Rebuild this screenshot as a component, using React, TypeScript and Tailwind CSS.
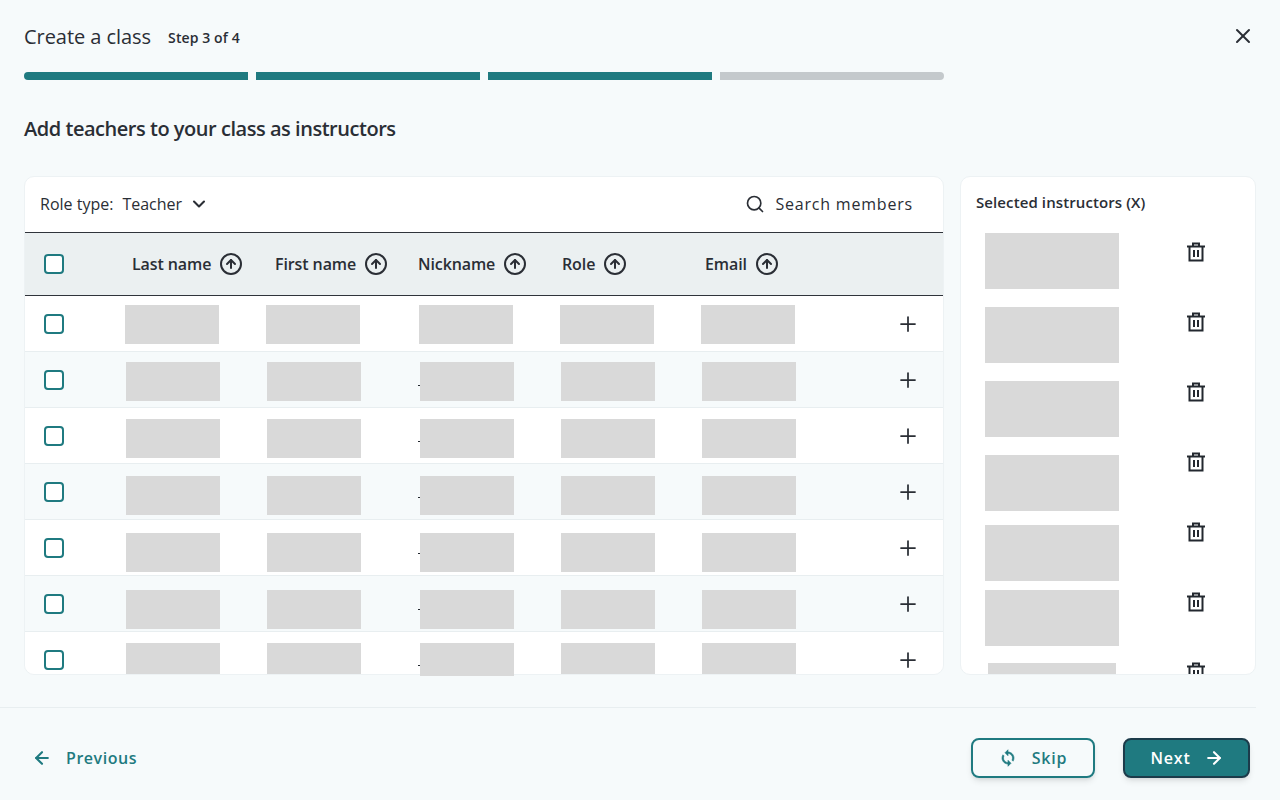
import { ArrowLeft, ArrowRight, ChevronDown, CircleArrowUp, Plus, Search, X } from "lucide-react";

const columns = [
  { label: "Last name", width: "w-[143px]" },
  { label: "First name", width: "w-[143px]" },
  { label: "Nickname", width: "w-[144px]" },
  { label: "Role", width: "w-[143px]" },
  { label: "Email", width: "w-[143px]" },
];

// the placeholder blocks drift a little further down the row each time
const rows = [
  { row: "h-[56px] bg-white border-b", offset: "mt-[9px]", start: "w-[61px]", box: "h-[39px]", nick: "h-[39px]", mark: false },
  { row: "h-[56px] bg-[#f6fafb] border-b", offset: "mt-[10px]", start: "w-[62px]", box: "h-[39px]", nick: "h-[39px]", mark: true },
  { row: "h-[56px] bg-white border-b", offset: "mt-[11px]", start: "w-[62px]", box: "h-[39px]", nick: "h-[39px]", mark: true },
  { row: "h-[56px] bg-[#f6fafb] border-b", offset: "mt-[12px]", start: "w-[62px]", box: "h-[39px]", nick: "h-[39px]", mark: true },
  { row: "h-[56px] bg-white border-b", offset: "mt-[13px]", start: "w-[62px]", box: "h-[39px]", nick: "h-[39px]", mark: true },
  { row: "h-[56px] bg-[#f6fafb] border-b", offset: "mt-[14px]", start: "w-[62px]", box: "h-[39px]", nick: "h-[39px]", mark: true },
  { row: "h-[42px] bg-white rounded-b-[10px]", offset: "mt-[11px]", start: "w-[62px]", box: "h-[31px]", nick: "h-[33px]", mark: true },
];

const selected = [
  "mt-0 ml-[9px] w-[134px] h-[56px]",
  "mt-[18px] ml-[9px] w-[134px] h-[56px]",
  "mt-[18px] ml-[9px] w-[134px] h-[56px]",
  "mt-[18px] ml-[9px] w-[134px] h-[56px]",
  "mt-[14px] ml-[9px] w-[134px] h-[56px]",
  "mt-[9px] ml-[9px] w-[134px] h-[56px]",
  "mt-[17px] ml-[12px] w-[128px] h-[56px]",
];

function Checkbox() {
  return <div className="w-5 h-5 shrink-0 rounded-[4px] border-2 border-[#1f7a80] bg-white" />;
}

function TrashIcon() {
  return (
    <svg width="24" height="24" viewBox="0 0 24 24" fill="none" stroke="#23282f" strokeWidth="2">
      <path d="M3 6.5h18" />
      <path d="M9 6V3.5h6V6" />
      <path d="M5.5 6.5V20.5h13V6.5" />
      <path d="M10 10v7M14 10v7" />
    </svg>
  );
}

function SyncIcon() {
  return (
    <svg width="18" height="18" viewBox="0 0 24 24" fill="currentColor" stroke="currentColor" strokeWidth="0.8">
      <path d="M12 4V1L8 5l4 4V6c3.31 0 6 2.69 6 6 0 1.01-.25 1.97-.7 2.8l1.46 1.46C19.54 15.03 20 13.57 20 12c0-4.42-3.58-8-8-8zm0 14c-3.31 0-6-2.69-6-6 0-1.01.25-1.97.7-2.8L5.24 7.74C4.46 8.97 4 10.43 4 12c0 4.42 3.58 8 8 8v3l4-4-4-4v3z" />
    </svg>
  );
}

export default function App() {
  return (
    <div
      className="w-[1280px] h-[800px] overflow-hidden bg-[#f6fafb] text-[#2a2e35]"
      style={{ fontFamily: '"Open Sans", "Noto Sans", sans-serif' }}
    >
      <div className="px-6 pt-[23px]">
        <div className="flex items-center justify-between h-[28px]">
          <div className="flex items-center gap-[17px]">
            <h1 className="text-[20px] leading-7 tracking-[-0.05px]">Create a class</h1>
            <span className="text-[14px] font-semibold tracking-[0.1px]">Step 3 of 4</span>
          </div>
          <X className="w-6 h-6 mr-px -mt-[2px]" />
        </div>

        <div className="flex gap-2 w-[920px] h-2 mt-[21px]">
          <div className="flex-1 bg-[#1f7a80] rounded-l-full" />
          <div className="flex-1 bg-[#1f7a80]" />
          <div className="flex-1 bg-[#1f7a80]" />
          <div className="flex-1 bg-[#c4c9cc] rounded-r-full" />
        </div>

        <h2 className="mt-[35px] text-[20px] leading-7 font-semibold tracking-[-0.47px]">
          Add teachers to your class as instructors
        </h2>

        <div className="flex gap-4 mt-[33px] h-[499px]">
          <div className="w-[920px] bg-white rounded-[10px] border border-[#edf2f4]">
            <div className="flex items-center justify-between h-[56px] pl-[15px] pr-[30px] pb-[2px] border-b border-[#2f343b] text-[16px]">
              <div className="flex items-center">
                <span>Role type:</span>
                <span className="ml-[9px]">Teacher</span>
                <ChevronDown className="w-5 h-5 ml-[7px]" strokeWidth={2.5} />
              </div>
              <div className="flex items-center gap-[10px]">
                <Search className="w-5 h-5" />
                <span className="tracking-[0.8px]">Search members</span>
              </div>
            </div>

            <div className="flex items-center h-[63px] bg-[#ebf0f1] border-b border-[#2f343b] pl-[19px]">
              <Checkbox />
              <div className="flex ml-[68px]">
                {columns.map((c) => (
                  <div key={c.label} className={`flex items-center gap-2 ${c.width}`}>
                    <span className="text-[16px] font-semibold tracking-[-0.1px]">{c.label}</span>
                    <CircleArrowUp className="w-6 h-6" />
                  </div>
                ))}
              </div>
            </div>

            {rows.map((r, i) => (
              <div key={i} className={`relative flex items-start pl-[19px] border-[#e8eef0] ${r.row}`}>
                <div className="mt-[18px]">
                  <Checkbox />
                </div>
                <div className={`flex ${r.offset}`}>
                  <div className={`${r.start} shrink-0`} />
                  <div className={`w-[141px] ${r.box}`}>
                    <div className="w-[94px] h-full bg-[#d9d9d9]" />
                  </div>
                  <div className={`w-[153px] ${r.box}`}>
                    <div className="w-[94px] h-full bg-[#d9d9d9]" />
                  </div>
                  <div className={`w-[141px] ${r.nick}`}>
                    <div className="w-[94px] h-full bg-[#d9d9d9]" />
                  </div>
                  <div className={`w-[141px] ${r.box}`}>
                    <div className="w-[94px] h-full bg-[#d9d9d9]" />
                  </div>
                  <div className={`w-[94px] ${r.box}`}>
                    <div className="w-[94px] h-full bg-[#d9d9d9]" />
                  </div>
                </div>
                {r.mark && <div className="absolute left-[393px] top-[33px] w-[2px] h-px bg-[#23282f]" />}
                <Plus className="absolute right-[23px] top-[16px] w-6 h-6" strokeWidth={1.75} />
              </div>
            ))}
          </div>

          <div className="w-[296px] bg-white rounded-[10px] border border-[#edf2f4] overflow-hidden pl-[15px]">
            <div className="mt-[15px] text-[15px] leading-5 font-semibold tracking-[0.1px]">Selected instructors (X)</div>
            <div className="flex mt-[21px]">
              <div className="w-[208px] shrink-0">
                {selected.map((s, i) => (
                  <div key={i} className={`bg-[#d9d9d9] ${s}`} />
                ))}
              </div>
              <div className="flex flex-col gap-[46px] mt-[7px]">
                {selected.map((_, i) => (
                  <TrashIcon key={i} />
                ))}
              </div>
            </div>
          </div>
        </div>
      </div>

      <div className="w-[1256px] mt-[32px] border-t border-[#e8eef0] flex items-center justify-between h-[92px] pl-[32px] pr-[6px] pt-[9px]">
        <div className="flex items-center gap-[14px] text-[#1f7a80]">
          <ArrowLeft className="w-5 h-5" strokeWidth={2.5} />
          <span className="text-[16px] font-semibold tracking-[0.55px]">Previous</span>
        </div>
        <div className="flex items-center gap-[28px]">
          <button className="flex items-center justify-center gap-[15px] w-[124px] h-[40px] rounded-lg border-2 border-[#1f7a80] text-[#1f7a80] shadow-md">
            <SyncIcon />
            <span className="text-[16px] font-semibold tracking-[0.8px]">Skip</span>
          </button>
          <button className="flex items-center justify-center gap-[13px] w-[127px] h-[40px] pl-[1px] rounded-lg border-2 border-[#1c3b4a] bg-[#1f7a80] text-white shadow-md">
            <span className="text-[16px] font-semibold tracking-[0.8px]">Next</span>
            <ArrowRight className="w-5 h-5" strokeWidth={2.5} />
          </button>
        </div>
      </div>
    </div>
  );
}
